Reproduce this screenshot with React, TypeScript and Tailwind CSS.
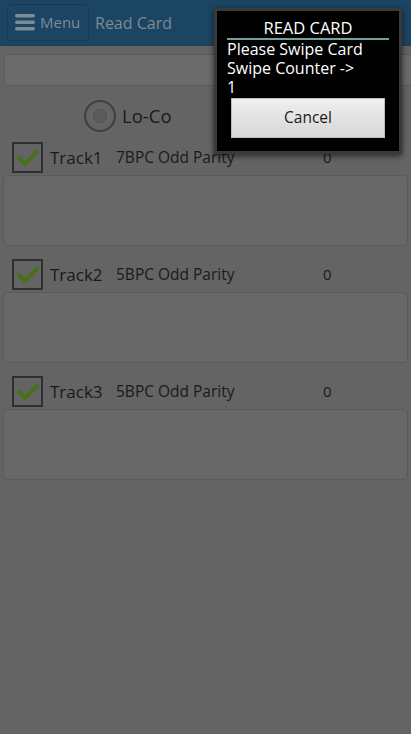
const tracks = [
  { name: "Track1", format: "7BPC Odd Parity", count: "0" },
  { name: "Track2", format: "5BPC Odd Parity", count: "0" },
  { name: "Track3", format: "5BPC Odd Parity", count: "0" },
];

const Check = () => (
  <div className="w-[31px] h-[31px] border-2 border-[#2f2f2f] flex items-center justify-center shrink-0">
    <svg width="22" height="18" viewBox="0 0 22 18">
      <path d="M2 9 L8 15 L20 3" fill="none" stroke="#46701a" strokeWidth="4" strokeLinecap="round" strokeLinejoin="round" />
    </svg>
  </div>
);

export default function App() {
  return (
    <div className="relative w-[411px] h-[734px] bg-[#646464] overflow-hidden" style={{ fontFamily: "'Open Sans', sans-serif" }}>
      {/* header */}
      <div className="h-[46px] bg-[#1b4562] border-b border-[#2a3b47] flex items-center px-[7px] gap-[6px]">
        <div className="h-[37px] w-[82px] border border-[#153a52] rounded-[3px] flex items-center pl-[7px] gap-[5px]">
          <svg width="20" height="17" viewBox="0 0 20 17">
            <rect x="0" y="0" width="20" height="3.5" rx="1.7" fill="#7d8b96" />
            <rect x="0" y="6.5" width="20" height="3.5" rx="1.7" fill="#7d8b96" />
            <rect x="0" y="13" width="20" height="3.5" rx="1.7" fill="#7d8b96" />
          </svg>
          <span className="text-[15px] text-[#7d8b96]">Menu</span>
        </div>
        <span className="text-[16px] text-[#7d8b96]">Read Card</span>
      </div>

      {/* input */}
      <div className="mt-[8px] ml-[4px] mr-[-4px] h-[32px] bg-[#6b6b6b] border border-[#5a5a5a] rounded-[4px]" />

      {/* radio */}
      <div className="flex items-center pl-[84px] mt-[14px] gap-[6px] h-[32px]">
        <div className="w-[32px] h-[32px] rounded-full border-2 border-[#3e3e3e] flex items-center justify-center">
          <div className="w-[18px] h-[18px] rounded-full bg-[#5a5a5a] border border-[#6e6e6e]" />
        </div>
        <span className="text-[18.5px] text-[#1a1a1a]">Lo-Co</span>
      </div>

      {/* tracks */}
      <div className="mt-[10px] flex flex-col gap-[13px]">
        {tracks.map((t) => (
          <div key={t.name}>
            <div className="flex items-center h-[31px] pl-[12px]">
              <Check />
              <span className="ml-[7px] w-[66px] text-[17px] text-[#1a1a1a]">{t.name}</span>
              <span className="w-[207px] text-[15.5px] text-[#1a1a1a]">{t.format}</span>
              <span className="text-[15px] text-[#1a1a1a]">{t.count}</span>
            </div>
            <div className="mt-[2px] mx-[3px] h-[71px] bg-[#686868] border border-[#5a5a5a] rounded-[4px]" />
          </div>
        ))}
      </div>

      {/* dialog */}
      <div className="absolute left-[214px] top-[8px] w-[188px] h-[146px] bg-black border-[3px] border-[#3a3a3a] shadow-[0_2px_6px_rgba(0,0,0,0.6)]">
        <div className="mx-[10px] mt-[8px] text-center text-[16.5px] leading-[18px] text-white border-b-2 border-[#6fa3a0] pb-[1px]">
          READ CARD
        </div>
        <div className="px-[10px] text-[16px] leading-[19px] text-white">
          <div>Please Swipe Card</div>
          <div>Swipe Counter -&gt;</div>
          <div>1</div>
        </div>
        <div className="mx-[14px] mt-[1px] h-[40px] flex items-center justify-center bg-gradient-to-b from-[#f0f0f0] to-[#d6d6d6] border border-[#bcbcbc] text-[15.5px] text-[#1a1a1a]">
          Cancel
        </div>
      </div>
    </div>
  );
}
